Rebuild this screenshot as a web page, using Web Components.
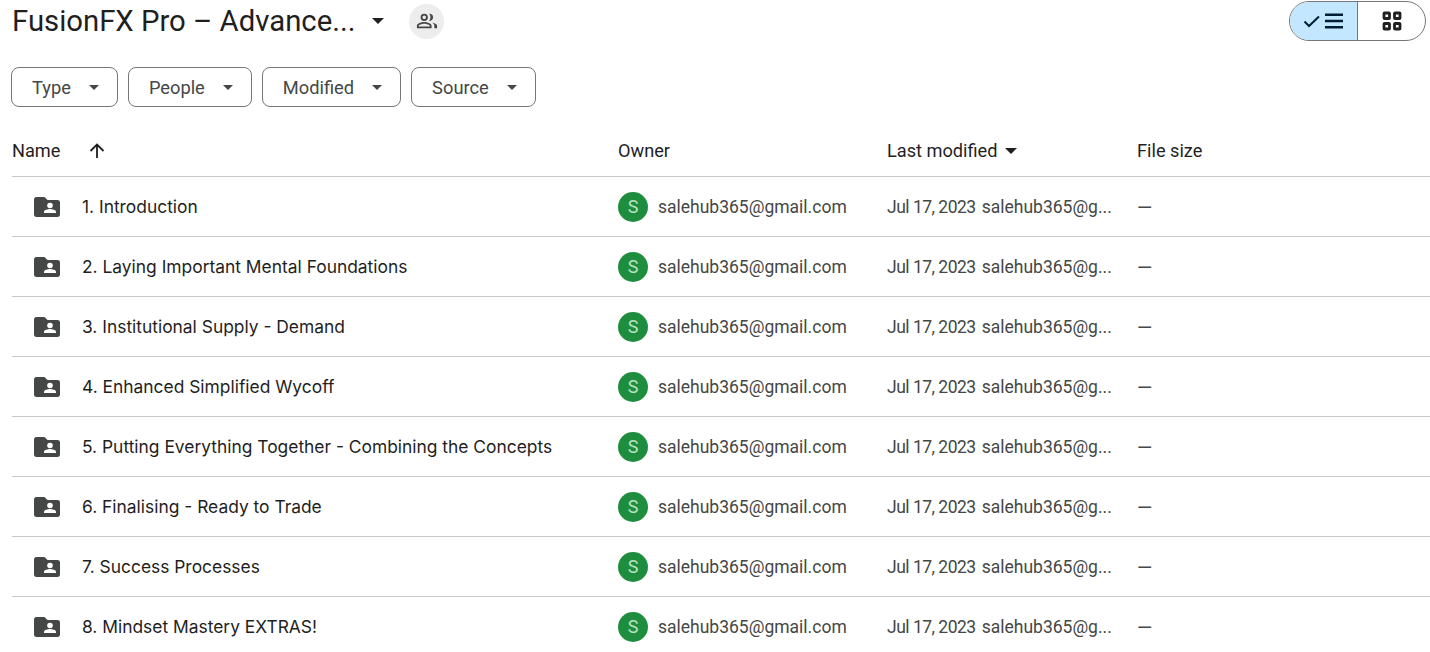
<!DOCTYPE html>
<html><head><meta charset="utf-8"><style>
html,body{margin:0;padding:0;background:#fff;overflow:hidden}
body{font-family:Roboto,"Liberation Sans",sans-serif;color:#1f1f1f;width:1430px;height:652px}
</style></head><body>
<drive-view></drive-view>
<template id="top-t"><style>
:host{display:flex;align-items:center;height:42px;padding:0 4px 0 12px;box-sizing:border-box}
.t{font-size:29.300px;line-height:42px;color:#1f1f1f;white-space:nowrap;width:344px}
.c{margin-left:16px;width:0;height:0;border:6px solid transparent;border-top-color:#1f1f1f;border-bottom:0}
.s{margin-left:25px;width:35px;height:35px;border-radius:50%;background:#ededed;display:flex;align-items:center;justify-content:center}
.g{margin-left:auto;display:flex;width:137px;height:40px;box-sizing:border-box;border:1px solid #747775;border-radius:20px;overflow:hidden}
.g div{display:flex;align-items:center;justify-content:center}
.a{width:68px;box-sizing:border-box;background:#c2e7ff;border-right:1px solid #747775;gap:1px}
.b{flex:1}
</style><div class="t">FusionFX Pro – Advance...</div><div class="c"></div><div class="s">
<svg width="22" height="22" viewBox="0 0 24 24" fill="#444746"><path d="M9 12a4 4 0 1 0 0-8 4 4 0 0 0 0 8zm0-6a2 2 0 1 1 0 4 2 2 0 0 1 0-4zM9 13c-2.700 0-8 1.300-8 4v3h16v-3c0-2.700-5.300-4-8-4zm6 5H3v-1c.2-.7 3.300-2 6-2s5.800 1.300 6 2v1zM15.500 4.100a4 4 0 0 1 0 7.800c-.4 0-.7-.1-1-.2A6 6 0 0 0 15.800 8a6 6 0 0 0-1.300-3.700c.3-.1.700-.2 1-.2zM17.700 13.600C19.800 14.300 23 15.300 23 17v3h-3v-3c0-1.300-.9-2.500-2.300-3.400z"/></svg>
</div><div class="g"><div class="a">
<svg width="20" height="20" viewBox="0 0 20 20" fill="none" stroke="#001d35" stroke-width="2"><path d="M2.500 10.500l4.500 4.500 10-9.500"/></svg>
<svg width="22" height="22" viewBox="0 0 22 22" fill="#001d35"><path d="M2 3.500h18v2.600H2zM2 9.700h18v2.600H2zM2 15.900h18v2.600H2z"/></svg>
</div><div class="b">
<svg width="22" height="22" viewBox="0 0 22 22" fill="none" stroke="#1f1f1f" stroke-width="2.800"><rect x="3" y="3" width="5.500" height="5.500" rx=".6"/><rect x="13.500" y="3" width="5.500" height="5.500" rx=".6"/><rect x="3" y="13.500" width="5.500" height="5.500" rx=".6"/><rect x="13.500" y="13.500" width="5.500" height="5.500" rx=".6"/></svg>
</div></div></template>
<template id="chip-t"><style>
:host{display:inline-flex;align-items:center;box-sizing:border-box;height:40px;border:1px solid #747775;border-radius:8px;padding:0 18px 0 20px;font-size:18.300px;color:#444746}
i{margin-left:18px;width:0;height:0;border:5.500px solid transparent;border-top-color:#444746;border-bottom:0}
</style><slot></slot><i></i></template>
<template id="row-t"><style>
:host{display:grid;grid-template-columns:606px 269px 250px 1fr;height:60px;align-items:center;border-bottom:1px solid #c7c7c7;box-sizing:border-box;font-size:17.500px;color:#444746;white-space:nowrap}
.n{display:flex;align-items:center;color:#1f1f1f;padding-left:22px;font-family:Inter,Roboto,sans-serif;font-size:17.400px}
.n svg{margin-right:22px;flex:none}
.o{display:flex;align-items:center}
.av{width:30px;height:30px;border-radius:50%;background:#1e8e3e;color:#b9e2c4;display:flex;align-items:center;justify-content:center;font-size:18px;margin-right:10px}
.m{display:flex;gap:6px}
.d{letter-spacing:-.5px}
.z{font-size:19.500px;padding-top:4px}
</style><div class="n"><svg width="26" height="22" viewBox="0 0 26 22"><path fill="#444746" d="M2.500 1h8l3 3h10a2.500 2.500 0 0 1 2.500 2v13a2.500 2.500 0 0 1-2.500 2h-21A2.500 2.500 0 0 1 0 19V3.500A2.500 2.500 0 0 1 2.500 1z"/><circle cx="16" cy="9.500" r="2.800" fill="#fff"/><path fill="#fff" d="M10 17v-1.200c0-1.800 3.800-2.800 6-2.800s6 1 6 2.800V17z"/></svg><span><slot></slot></span></div>
<div class="o"><div class="av">S</div>salehub365@gmail.com</div>
<div class="m"><span class="d">Jul 17, 2023</span><span>salehub365@g...</span></div>
<div class="z">—</div></template>
<template id="view-t"><style>
:host{display:block}
.f{display:flex;gap:10px;padding:25px 0 0 11px}
.h{display:grid;grid-template-columns:606px 269px 250px 1fr;height:70px;padding-top:18px;margin-left:12px;align-items:center;border-bottom:1px solid #c7c7c7;box-sizing:border-box;font-size:18.200px;color:#1f1f1f;white-space:nowrap}
.h>div{display:flex;align-items:center}
.h svg{margin-left:28px}
.h i{margin-left:7px;width:0;height:0;border:6.500px solid transparent;border-top-color:#1f1f1f;border-bottom:0}
.r{margin-left:12px}
</style><top-bar></top-bar><div class="f"><filter-chip>Type</filter-chip><filter-chip>People</filter-chip><filter-chip>Modified</filter-chip><filter-chip>Source</filter-chip></div>
<div class="h"><div>Name<svg width="18" height="18" viewBox="0 0 18 18" fill="none" stroke="#1f1f1f" stroke-width="1.800"><path d="M9 16V2.500M2.500 9L9 2.500 15.500 9"/></svg></div><div>Owner</div><div>Last modified<i></i></div><div>File size</div></div>
<div class="r"><file-row>1. Introduction</file-row><file-row>2. Laying Important Mental Foundations</file-row><file-row>3. Institutional Supply - Demand</file-row><file-row>4. Enhanced Simplified Wycoff</file-row><file-row>5. Putting Everything Together - Combining the Concepts</file-row><file-row>6. Finalising - Ready to Trade</file-row><file-row>7. Success Processes</file-row><file-row>8. Mindset Mastery EXTRAS!</file-row></div></template>
<script>
function def(tag,id){customElements.define(tag,class extends HTMLElement{constructor(){super();this.attachShadow({mode:'open'}).appendChild(document.getElementById(id).content.cloneNode(true))}})}
def('top-bar','top-t');def('filter-chip','chip-t');def('file-row','row-t');def('drive-view','view-t');
</script></body></html>
